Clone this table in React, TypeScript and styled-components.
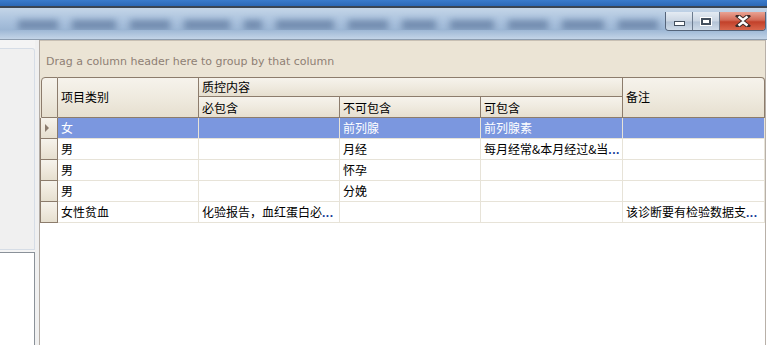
import React from "react";
import styled, { createGlobalStyle } from "styled-components";

const GlobalStyle = createGlobalStyle`
  html, body { margin: 0; padding: 0; background: #ffffff; }
  body { font-family: "Noto Sans CJK SC", "Liberation Sans", sans-serif; }
`;

const COLS = "17px 141px 141px 141px 142px 142px";

type Row = {
  kind: string;
  must: string;
  mustCut?: boolean;
  mustNot: string;
  may: string;
  mayCut?: boolean;
  note: string;
  noteCut?: boolean;
};

const rows: Row[] = [
  { kind: "女", must: "", mustNot: "前列腺", may: "前列腺素", note: "" },
  { kind: "男", must: "", mustNot: "月经", may: "每月经常&本月经过&当", mayCut: true, note: "" },
  { kind: "男", must: "", mustNot: "怀孕", may: "", note: "" },
  { kind: "男", must: "", mustNot: "分娩", may: "", note: "" },
  { kind: "女性贫血", must: "化验报告，血红蛋白必", mustCut: true, mustNot: "", may: "", note: "该诊断要有检验数据支", noteCut: true },
];

const tabWidths = [40, 44, 40, 46, 18, 58, 40, 34, 44, 40, 42, 40];

export default function App() {
  return (
    <Screen>
      <GlobalStyle />
      <TitleBar />
      <TabStrip>
        <Tabs>
          {tabWidths.map((w, i) => (
            <BlurTab key={i} style={{ width: w }} />
          ))}
        </Tabs>
        <WinButtons>
          <WinBtn>
            <MinGlyph />
          </WinBtn>
          <WinBtn>
            <MaxGlyph />
          </WinBtn>
          <CloseBtn>
            <svg width="16" height="12" viewBox="0 0 16 12">
              <path
                d="M3 1 L8 5 L13 1 M3 11 L8 7 L13 11"
                stroke="#3a2a28"
                strokeWidth="4.2"
                fill="none"
                strokeLinecap="square"
              />
              <path
                d="M3.5 1.5 L8 5 L12.5 1.5 M3.5 10.5 L8 7 L12.5 10.5"
                stroke="#ffffff"
                strokeWidth="2.4"
                fill="none"
              />
            </svg>
          </CloseBtn>
        </WinButtons>
      </TabStrip>
      <Body>
        <LeftPane>
          <LeftTop />
          <LeftBottom />
        </LeftPane>
        <Splitter />
        <GridPane>
          <GroupPanel>Drag a column header here to group by that column</GroupPanel>
          <Header>
            <HeadCell $row="1 / 3" $col="1" $corner="left" />
            <HeadCell $row="1 / 3" $col="2" $center>
              项目类别
            </HeadCell>
            <HeadCell $row="1" $col="3 / 6">
              质控内容
            </HeadCell>
            <HeadCell $row="1 / 3" $col="6" $center $corner="right">
              备注
            </HeadCell>
            <HeadCell $row="2" $col="3">
              必包含
            </HeadCell>
            <HeadCell $row="2" $col="4">
              不可包含
            </HeadCell>
            <HeadCell $row="2" $col="5">
              可包含
            </HeadCell>
          </Header>
          {rows.map((r, i) => (
            <DataRow key={i} $selected={i === 0}>
              <Indicator>{i === 0 && <Arrow />}</Indicator>
              <Cell>{r.kind}</Cell>
              <Cell>
                {r.must}
                {r.mustCut && <Dots>...</Dots>}
              </Cell>
              <Cell>{r.mustNot}</Cell>
              <Cell>
                {r.may}
                {r.mayCut && <Dots>...</Dots>}
              </Cell>
              <Cell>
                {r.note}
                {r.noteCut && <Dots>...</Dots>}
              </Cell>
            </DataRow>
          ))}
        </GridPane>
      </Body>
    </Screen>
  );
}

const Screen = styled.div`
  width: 767px;
  height: 345px;
  overflow: hidden;
  display: flex;
  flex-direction: column;
  background: #ffffff;
`;

const TitleBar = styled.div`
  height: 6px;
  background: linear-gradient(#3a7bcc, #2c68b6);
  border-bottom: 2px solid #3b4553;
`;

const TabStrip = styled.div`
  height: 31px;
  display: flex;
  align-items: flex-start;
  background: linear-gradient(#c4d5e8 0%, #a8c0dc 45%, #9cb6d4 70%, #c3d4e7 100%);
  border-bottom: 1px solid #8d9db0;
`;

const Tabs = styled.div`
  flex: 1;
  display: flex;
  gap: 14px;
  padding: 12px 0 0 18px;
  overflow: hidden;
`;

const BlurTab = styled.div`
  flex: none;
  height: 10px;
  background: #6a84a8;
  filter: blur(3px);
  opacity: 0.85;
`;

const WinButtons = styled.div`
  flex: none;
  display: flex;
  margin: 4px 1px 0 0;
  height: 18px;
  border: 1px solid #55647a;
  border-top: none;
  border-radius: 0 0 4px 4px;
  overflow: hidden;
`;

const WinBtn = styled.div`
  width: 26px;
  display: flex;
  align-items: center;
  justify-content: center;
  background: linear-gradient(#e4ebf3 0%, #cbd6e3 50%, #b3c3d6 55%, #cfdbe8 100%);
  border-right: 1px solid #6c7b8e;
`;

const CloseBtn = styled.div`
  width: 45px;
  display: flex;
  align-items: center;
  justify-content: center;
  background: linear-gradient(#e9a394 0%, #d36a56 45%, #c2412a 55%, #d9664c 100%);
`;

const MinGlyph = styled.div`
  width: 9px;
  height: 3px;
  margin-top: 5px;
  background: #ffffff;
  border: 1px solid #44505e;
`;

const MaxGlyph = styled.div`
  width: 8px;
  height: 5px;
  border: 1px solid #44505e;
  background: #ffffff;
  box-shadow: inset 0 0 0 1px #44505e;
  outline: 1px solid #ffffff;
`;

const Body = styled.div`
  flex: 1;
  display: flex;
  min-height: 0;
`;

const LeftPane = styled.div`
  width: 35px;
  flex: none;
  display: flex;
  flex-direction: column;
  padding-top: 8px;
  background: #f4f4f4;
`;

const LeftTop = styled.div`
  height: 200px;
  background: #f0f0f0;
  border: 1px solid #d6dde6;
  border-left: none;
  border-radius: 0 3px 0 0;
`;

const LeftBottom = styled.div`
  flex: 1;
  margin-top: 2px;
  background: #ffffff;
  border-top: 1px solid #8a9199;
  border-right: 1px solid #8a9199;
`;

const Splitter = styled.div`
  width: 5px;
  flex: none;
  background: #f0f0f0;
  border-right: 1px solid #b3aca5;
  box-sizing: border-box;
`;

const GridPane = styled.div`
  flex: 1;
  display: flex;
  flex-direction: column;
  background: #ffffff;
  border-right: 1px solid #b8b0a8;
  margin-right: 1px;
`;

const GroupPanel = styled.div`
  height: 37px;
  box-sizing: border-box;
  padding: 14px 0 0 6px;
  background: #ebe4d5;
  border-top: 1px solid #c8c0b4;
  color: #8e7f74;
  font-family: "DejaVu Sans", "Liberation Sans", sans-serif;
  font-size: 11px;
`;

const Header = styled.div`
  display: grid;
  grid-template-columns: ${COLS};
  grid-template-rows: 20px 21px;
  background: #ebe4d5;
  padding-left: 1px;
`;

const HeadCell = styled.div<{
  $row: string;
  $col: string;
  $center?: boolean;
  $corner?: "left" | "right";
}>`
  grid-row: ${(p) => p.$row};
  grid-column: ${(p) => p.$col};
  display: flex;
  align-items: ${(p) => (p.$center ? "center" : "flex-end")};
  padding: ${(p) => (p.$center ? "0 3px 2px" : "0 3px 0")};
  box-sizing: border-box;
  font-size: 12px;
  line-height: 18px;
  color: #000000;
  background: linear-gradient(#f6f3ec 0%, #efeadf 50%, #e6dfcf 100%);
  border-top: ${(p) => (p.$row.startsWith("1") ? "1px solid #8c7c6c" : "none")};
  border-bottom: 1px solid #8c7c6c;
  border-right: 1px solid #8c7c6c;
  border-left: ${(p) => (p.$corner === "left" ? "1px solid #8c7c6c" : "none")};
  border-radius: ${(p) =>
    p.$corner === "left" ? "4px 0 0 0" : p.$corner === "right" ? "0 4px 0 0" : "0"};
  white-space: nowrap;
  overflow: hidden;
`;

const DataRow = styled.div<{ $selected?: boolean }>`
  display: grid;
  grid-template-columns: ${COLS};
  height: 21px;
  padding-left: 1px;
  background: ${(p) => (p.$selected ? "#7b97df" : "#ffffff")};
  color: ${(p) => (p.$selected ? "#ffffff" : "#000000")};
`;

const Indicator = styled.div`
  display: flex;
  align-items: center;
  justify-content: center;
  background: linear-gradient(#f6f3ec 0%, #efe9dd 50%, #e6dfcf 100%);
  border-left: 1px solid #8c7c6c;
  border-right: 1px solid #8c7c6c;
  border-bottom: 1px solid #8c7c6c;
  box-sizing: border-box;
  margin-left: -1px;
  width: 18px;
`;

const Arrow = styled.div`
  width: 0;
  height: 0;
  border-top: 4px solid transparent;
  border-bottom: 4px solid transparent;
  border-left: 4px solid #8a7b6d;
  margin-left: -4px;
`;

const Cell = styled.div`
  box-sizing: border-box;
  border-right: 1px solid #e7e3d8;
  border-bottom: 1px solid #e7e3d8;
  padding: 0 3px;
  font-size: 12px;
  line-height: 20px;
  white-space: nowrap;
  overflow: hidden;
`;

const Dots = styled.span`
  color: #1a3f9a;
  font-family: "Liberation Sans", sans-serif;
  font-weight: bold;
  letter-spacing: 0.5px;
`;
